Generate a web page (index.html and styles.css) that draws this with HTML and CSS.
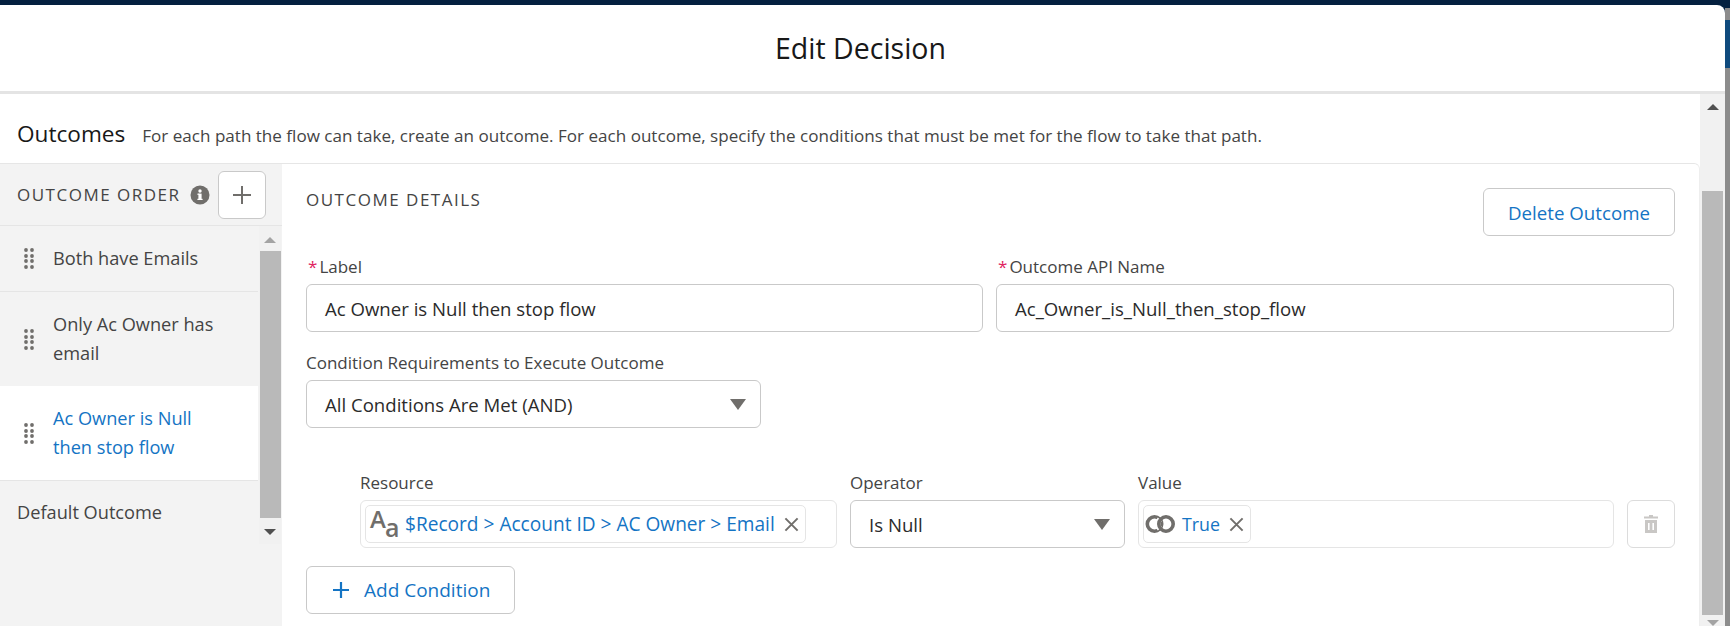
FILE: index.html
```html
<!DOCTYPE html>
<html lang="en">
<head>
<meta charset="utf-8">
<title>Edit Decision</title>
<link rel="stylesheet" href="styles.css">
</head>
<body>
<div class="screen">
  <div class="modal">
    <header class="modal-head"><h1>Edit Decision</h1></header>
    <div class="modal-body">
      <div class="content">
        <div class="intro">
          <h2>Outcomes</h2>
          <p>For each path the flow can take, create an outcome. For each outcome, specify the conditions that must be met for the flow to take that path.</p>
        </div>
        <div class="panel">
          <aside class="side">
            <div class="side-head">
              <span class="caps">OUTCOME ORDER</span>
              <svg class="info" viewBox="0 0 20 20"><circle cx="10" cy="10" r="9.5" fill="#706e6b"/><rect x="8.4" y="8.6" width="3.2" height="6.4" fill="#fff"/><rect x="7.4" y="8.6" width="2" height="1.2" fill="#fff"/><rect x="7.4" y="13.8" width="5.2" height="1.2" fill="#fff"/><circle cx="10" cy="6" r="1.7" fill="#fff"/></svg>
              <button class="add-btn" type="button"><svg viewBox="0 0 20 20" width="20" height="20"><path d="M10 1v18M1 10h18" stroke="#706e6b" stroke-width="2"/></svg></button>
            </div>
            <div class="side-main">
              <div class="side-list">
                <div class="item item-one">
                  <svg class="grip" viewBox="0 0 10 21"><g fill="#706e6b"><circle cx="2" cy="2" r="1.9"/><circle cx="8" cy="2" r="1.9"/><circle cx="2" cy="8" r="1.9"/><circle cx="8" cy="8" r="1.9"/><circle cx="2" cy="13" r="1.9"/><circle cx="8" cy="13" r="1.9"/><circle cx="2" cy="19" r="1.9"/><circle cx="8" cy="19" r="1.9"/></g></svg>
                  <span>Both have Emails</span>
                </div>
                <div class="item item-two">
                  <svg class="grip" viewBox="0 0 10 21"><g fill="#706e6b"><circle cx="2" cy="2" r="1.9"/><circle cx="8" cy="2" r="1.9"/><circle cx="2" cy="8" r="1.9"/><circle cx="8" cy="8" r="1.9"/><circle cx="2" cy="13" r="1.9"/><circle cx="8" cy="13" r="1.9"/><circle cx="2" cy="19" r="1.9"/><circle cx="8" cy="19" r="1.9"/></g></svg>
                  <span>Only Ac Owner has email</span>
                </div>
                <div class="item item-active">
                  <svg class="grip" viewBox="0 0 10 21"><g fill="#706e6b"><circle cx="2" cy="2" r="1.9"/><circle cx="8" cy="2" r="1.9"/><circle cx="2" cy="8" r="1.9"/><circle cx="8" cy="8" r="1.9"/><circle cx="2" cy="13" r="1.9"/><circle cx="8" cy="13" r="1.9"/><circle cx="2" cy="19" r="1.9"/><circle cx="8" cy="19" r="1.9"/></g></svg>
                  <span>Ac Owner is Null then stop flow</span>
                </div>
                <div class="default-item">Default Outcome</div>
              </div>
              <div class="side-scroll">
                <span class="arrow-up small"></span>
                <span class="side-thumb"></span>
                <span class="arrow-down small"></span>
              </div>
            </div>
          </aside>
          <section class="details">
            <div class="details-head">
              <span class="caps">OUTCOME DETAILS</span>
              <button class="btn delete-btn" type="button">Delete Outcome</button>
            </div>
            <div class="name-row">
              <div class="field">
                <label class="lbl"><span class="req">*</span>Label</label>
                <div class="control">Ac Owner is Null then stop flow</div>
              </div>
              <div class="field">
                <label class="lbl"><span class="req">*</span>Outcome API Name</label>
                <div class="control">Ac_Owner_is_Null_then_stop_flow</div>
              </div>
            </div>
            <div class="field req-field">
              <label class="lbl">Condition Requirements to Execute Outcome</label>
              <div class="control select">All Conditions Are Met (AND)<span class="caret"></span></div>
            </div>
            <div class="cond-row">
              <div class="field">
                <label class="lbl">Resource</label>
                <div class="control pill-box">
                  <span class="pill">
                    <span class="aa"><span class="aa-big">A</span><span class="aa-small">a</span></span>
                    <span class="pill-text">$Record &gt; Account ID &gt; AC Owner &gt; Email</span>
                    <svg class="x" viewBox="0 0 16 16"><path d="M1.5 1.5l13 13M14.5 1.5l-13 13" stroke="#706e6b" stroke-width="2.1"/></svg>
                  </span>
                </div>
              </div>
              <div class="field">
                <label class="lbl">Operator</label>
                <div class="control select">Is Null<span class="caret"></span></div>
              </div>
              <div class="field">
                <label class="lbl">Value</label>
                <div class="control pill-box">
                  <span class="pill">
                    <svg class="rings" viewBox="0 0 31 18"><g fill="none" stroke-width="3.6"><circle cx="9.5" cy="9" r="7.2" stroke="#706e6b"/><path d="M14.8 4.2A7.2 7.2 0 0 0 14.8 13.8" stroke="#fff" stroke-width="5.4"/><circle cx="21" cy="9" r="7.2" stroke="#706e6b"/></g></svg>
                    <span class="pill-text true-text">True</span>
                    <svg class="x" viewBox="0 0 16 16"><path d="M1.5 1.5l13 13M14.5 1.5l-13 13" stroke="#706e6b" stroke-width="2.1"/></svg>
                  </span>
                </div>
              </div>
              <button class="btn trash-btn" type="button" aria-label="Delete condition">
                <svg viewBox="0 0 16 20" width="16" height="20"><path fill="#c9c7c5" d="M6 1h4v1.6h5v2H1v-2h5zM2 6h12v13H2zM5 9v7h1.6V9zM9.4 9v7H11V9z" fill-rule="evenodd"/></svg>
              </button>
            </div>
            <button class="btn add-cond" type="button"><svg viewBox="0 0 20 20" width="20" height="20"><path d="M10 2v16M2 10h16" stroke="#1474c4" stroke-width="2.2"/></svg>Add Condition</button>
          </section>
        </div>
      </div>
      <div class="main-scroll">
        <span class="arrow-up"></span>
        <span class="main-spacer"></span>
        <span class="main-thumb"></span>
        <span class="arrow-down faint"></span>
      </div>
    </div>
  </div>
  <div class="backdrop">
    <span class="bd-top"></span>
    <span class="bd-grey"></span>
    <span class="bd-blue"></span>
    <span class="bd-rest"></span>
  </div>
</div>
</body>
</html>
```

FILE: styles.css
```css
* { box-sizing: border-box; }
html, body { margin: 0; height: 626px; overflow: hidden; }
body { font-family: "Open Sans", "Noto Sans", sans-serif; color: #444; background: #fff; }
.screen { display: flex; width: 1730px; height: 626px; background: #04203f; padding-top: 5px; }
.modal { width: 1725px; height: 621px; background: #fff; border-radius: 0 8px 0 0; display: flex; flex-direction: column; overflow: hidden; }
.modal-head { height: 89px; padding: 0 4px 1px 0; border-bottom: 3px solid #e4e4e4; display: flex; align-items: center; justify-content: center; }
.modal-head h1 { margin: 0; font-size: 28.5px; font-weight: 400; color: #181818; }
.modal-body { flex: 1; display: flex; min-height: 0; }
.content { flex: 1; min-width: 0; display: flex; flex-direction: column; }
.intro { height: 69px; display: flex; align-items: baseline; padding: 24px 0 0 17px; gap: 17px; }
.intro h2 { margin: 0; font-size: 22.6px; font-weight: 400; color: #181818; }
.intro p { margin: 0; font-size: 17.07px; color: #444; white-space: nowrap; }
.panel { flex: 1; display: flex; border-top: 1px solid #e6e6e6; border-right: 1px solid #eee; border-top-right-radius: 6px; min-height: 0; }
.side { width: 282px; background: #f3f3f3; flex: none; display: flex; flex-direction: column; }
.side-head { height: 62px; display: flex; align-items: center; padding: 0 16px 0 17px; border-bottom: 1px solid #e5e5e5; }
.caps { font-size: 17px; letter-spacing: 1.5px; color: #444; white-space: nowrap; }
.info { width: 20px; height: 20px; margin-left: 9px; flex: none; }
.add-btn { width: 48px; height: 48px; margin-left: auto; background: #fff; border: 1px solid #c9c9c9; border-radius: 6px; padding: 0; display: flex; align-items: center; justify-content: center; flex: none; }
.side-main { flex: 1; display: flex; min-height: 0; }
.side-list { width: 258px; flex: none; }
.item { display: flex; align-items: center; padding-left: 24px; font-size: 18.2px; line-height: 29.5px; border-bottom: 1px solid #e5e5e5; }
.item span { margin-left: 19px; max-width: 175px; }
.item-one { height: 66px; }
.item-two { height: 94px; border-bottom: 0; }
.item-active { height: 95px; background: #fff; color: #1474c4; }
.grip { width: 10px; height: 21px; flex: none; }
.default-item { padding: 17px 0 0 17px; font-size: 18.2px; line-height: 29px; }
.side-scroll { width: 22px; margin-left: 1px; height: 318px; display: flex; flex-direction: column; align-items: center; background: #f1f1f1; }
.side-thumb { width: 21px; height: 267px; background: #b9b9b9; margin-top: 8px; flex: none; }
.arrow-up, .arrow-down { width: 0; height: 0; border-left: 6px solid transparent; border-right: 6px solid transparent; flex: none; }
.arrow-up { border-bottom: 6px solid #505050; }
.arrow-down { border-top: 6px solid #505050; }
.arrow-up.small { border-bottom-color: #a3a3a3; margin-top: 11px; }
.arrow-down.small { margin-top: 11px; }
.arrow-down.faint { border-top-color: #a3a3a3; margin-top: 5px; }
.details { flex: 1; min-width: 0; padding: 0 24px; }
.details-head { height: 93px; display: flex; justify-content: space-between; align-items: flex-start; }
.details-head .caps { margin-top: 24px; }
.btn { background: #fff; border: 1px solid #c9c9c9; border-radius: 6px; color: #1474c4; font: inherit; font-size: 18.7px; padding: 0; display: flex; align-items: center; justify-content: center; }
.delete-btn { width: 192px; height: 48px; margin-top: 24px; }
.name-row { display: grid; grid-template-columns: 677px 678px; gap: 13px; }
.field { min-width: 0; }
.lbl { display: block; font-size: 17px; line-height: 20px; height: 27px; color: #444; white-space: nowrap; }
.req { color: #e0245e; margin: 0 2px; }
.control { height: 48px; border: 1px solid #c9c9c9; border-radius: 6px; background: #fff; padding: 0 18px; font-size: 18.6px; display: flex; align-items: center; color: #2b2b2b; }
.req-field { width: 455px; margin-top: 21px; }
.select { justify-content: space-between; }
.caret { width: 0; height: 0; border-left: 8.5px solid transparent; border-right: 8.5px solid transparent; border-top: 11px solid #706e6b; margin-right: -4px; }
.cond-row { display: grid; grid-template-columns: 477px 275px 476px 48px; gap: 13px; margin: 45px 0 0 54px; align-items: end; width: 1315px; }
.pill-box { padding: 0 4px; border-color: #e5e5e5; }
.pill { height: 38px; border: 1px solid #e5e5e5; border-radius: 5px; display: inline-flex; align-items: center; padding: 0 6px 0 4px; color: #1474c4; white-space: nowrap; }
.aa { display: inline-flex; color: #706e6b; font-weight: 600; font-size: 24px; width: 32px; height: 34px; margin-right: 3px; flex: none; }
.aa-big { line-height: 24px; }
.aa-small { line-height: 24px; margin-top: 8px; font-size: 25px; margin-left: -1px; }
.pill-text { font-size: 19.1px; }
.true-text { font-size: 17.8px; }
.x { width: 15px; height: 15px; margin-left: 9px; flex: none; }
.rings { width: 31px; height: 18px; margin: 0 6px 0 -3px; flex: none; }
.trash-btn { width: 48px; height: 48px; border-color: #dcdcdc; }
.add-cond { width: 209px; height: 48px; margin-top: 18px; gap: 13px; justify-content: flex-start; padding-left: 24px; font-size: 19px; }
.main-scroll { width: 25px; flex: none; background: #f1f1f1; display: flex; flex-direction: column; align-items: center; padding-top: 10px; }
.main-spacer { height: 81px; flex: none; }
.main-thumb { width: 21px; height: 424px; background: #b9b9b9; flex: none; }
.backdrop { width: 5px; height: 621px; display: flex; flex-direction: column; }
.bd-top { height: 3px; background: #04203f; }
.bd-grey { height: 12px; background: #8c8c8c; }
.bd-blue { height: 48px; background: #0f4a7d; }
.bd-rest { flex: 1; background: #8c8c8c; }
```
